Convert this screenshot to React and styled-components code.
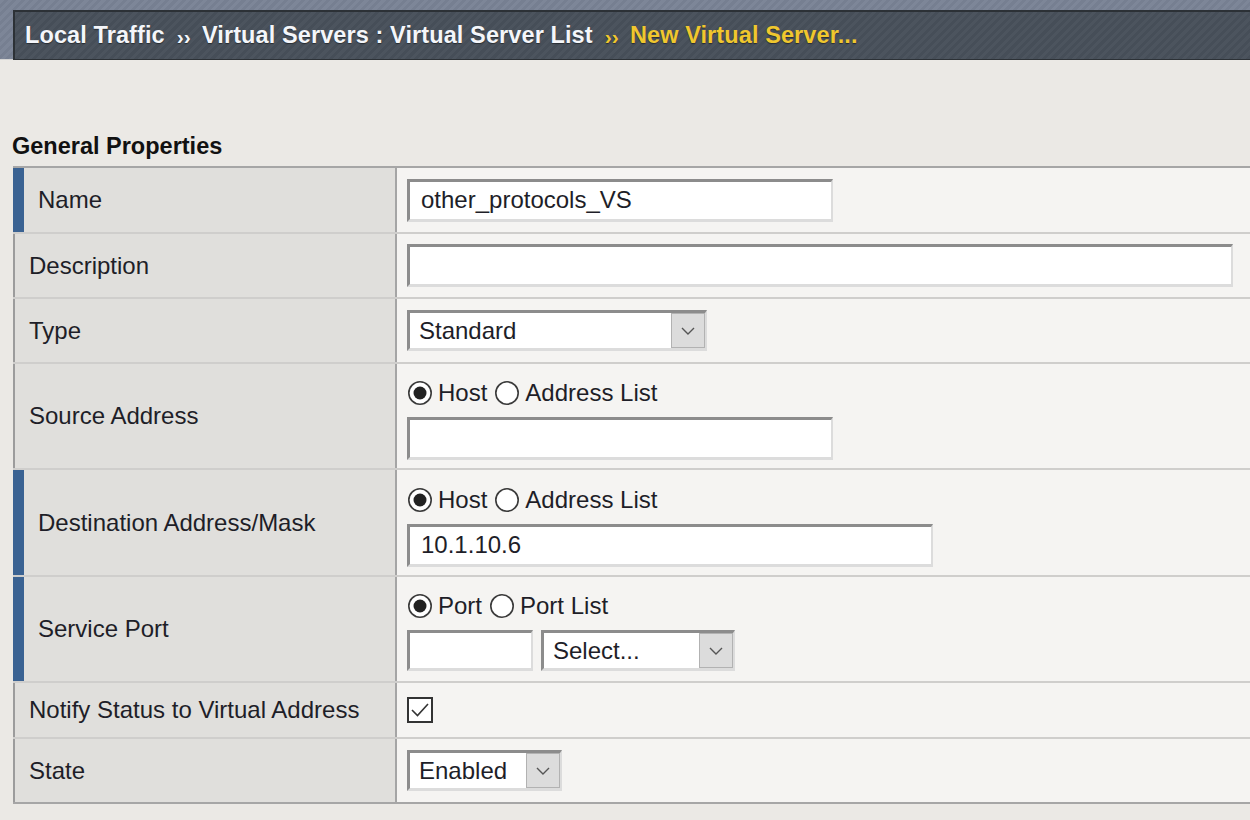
import styled, { createGlobalStyle } from "styled-components";

const GlobalStyle = createGlobalStyle`
  html, body {
    margin: 0;
    padding: 0;
    background: #ebe9e5;
  }
  body {
    font-family: "Liberation Sans", Arial, sans-serif;
    color: #1e1e28;
    overflow: hidden;
  }
`;

function Chevron() {
  return (
    <svg width="16" height="10" viewBox="0 0 16 10">
      <path d="M2 2 L8 8 L14 2" fill="none" stroke="#555" strokeWidth="1.4" />
    </svg>
  );
}

function RadioMark({ checked }) {
  return (
    <svg width="26" height="26" viewBox="0 0 26 26">
      <circle cx="13" cy="13" r="11.2" fill="#fff" stroke="#3a3a3a" strokeWidth="1.6" />
      {checked && <circle cx="13" cy="13" r="6.5" fill="#222" />}
    </svg>
  );
}

function CheckMark() {
  return (
    <svg width="26" height="26" viewBox="0 0 26 26">
      <rect x="1" y="1" width="24" height="24" fill="#fff" stroke="#333" strokeWidth="2" />
      <path d="M5 13 L10.5 18.5 L21 7" fill="none" stroke="#333" strokeWidth="1.6" />
    </svg>
  );
}

function App() {
  return (
    <Page>
      <GlobalStyle />
      <TopBand>
        <Crumbs>
          <span>Local Traffic</span>
          <Sep>››</Sep>
          <span>Virtual Servers : Virtual Server List</span>
          <Sep $current>››</Sep>
          <Current>New Virtual Server...</Current>
        </Crumbs>
      </TopBand>

      <SectionTitle>General Properties</SectionTitle>

      <Table>
        <Row $h={66}>
          <Label $req>Name</Label>
          <Value>
            <TextBox $w={426} readOnly value="other_protocols_VS" />
          </Value>
        </Row>
        <Row $h={65}>
          <Label>Description</Label>
          <Value>
            <TextBox $w={826} readOnly value="" />
          </Value>
        </Row>
        <Row $h={65}>
          <Label>Type</Label>
          <Value>
            <Select $w={300}>
              <SelectText>Standard</SelectText>
              <Arrow>
                <Chevron />
              </Arrow>
            </Select>
          </Value>
        </Row>
        <Row $h={106}>
          <Label>Source Address</Label>
          <Value $pad={7}>
            <RadioLine>
              <Radio>
                <RadioMark checked />
                <span>Host</span>
              </Radio>
              <Radio>
                <RadioMark />
                <span>Address List</span>
              </Radio>
            </RadioLine>
            <TextBox $w={426} readOnly value="" />
          </Value>
        </Row>
        <Row $h={107}>
          <Label $req>Destination Address/Mask</Label>
          <Value $pad={7}>
            <RadioLine>
              <Radio>
                <RadioMark checked />
                <span>Host</span>
              </Radio>
              <Radio>
                <RadioMark />
                <span>Address List</span>
              </Radio>
            </RadioLine>
            <TextBox $w={526} readOnly value="10.1.10.6" />
          </Value>
        </Row>
        <Row $h={106}>
          <Label $req>Service Port</Label>
          <Value $pad={5}>
            <RadioLine>
              <Radio>
                <RadioMark checked />
                <span>Port</span>
              </Radio>
              <Radio>
                <RadioMark />
                <span>Port List</span>
              </Radio>
            </RadioLine>
            <Inline>
              <TextBox $w={126} $h={41} readOnly value="" />
              <Select $w={194}>
                <SelectText>Select...</SelectText>
                <Arrow>
                  <Chevron />
                </Arrow>
              </Select>
            </Inline>
          </Value>
        </Row>
        <Row $h={56}>
          <Label>Notify Status to Virtual Address</Label>
          <Value>
            <CheckMark />
          </Value>
        </Row>
        <Row $h={63} $last>
          <Label>State</Label>
          <Value>
            <Select $w={155}>
              <SelectText>Enabled</SelectText>
              <Arrow>
                <Chevron />
              </Arrow>
            </Select>
          </Value>
        </Row>
      </Table>
    </Page>
  );
}

export default App;

const Page = styled.div`
  width: 1250px;
  min-height: 820px;
`;

const TopBand = styled.div`
  height: 60px;
  box-sizing: border-box;
  padding: 10px 0 0 13px;
  background: repeating-linear-gradient(
    135deg,
    #7d8698 0px,
    #7d8698 3px,
    #767f91 3px,
    #767f91 6px
  );
  border-bottom: 1px solid #d4d4d4;
`;

const Crumbs = styled.div`
  height: 50px;
  box-sizing: border-box;
  border: 2px solid #2c3136;
  border-right: none;
  border-bottom-width: 1px;
  background: repeating-linear-gradient(
    135deg,
    #4c545e 0px,
    #4c545e 3px,
    #464e58 3px,
    #464e58 6px
  );
  display: flex;
  align-items: center;
  padding-left: 10px;
  font-size: 23.5px;
  letter-spacing: 0.1px;
  font-weight: bold;
  color: #f4f6fa;
  text-shadow: 0 1px 1px rgba(0, 0, 0, 0.45);
  white-space: nowrap;
`;

const Sep = styled.span`
  font-size: 21px;
  margin: 3px 11px 0 12px;
  color: ${(p) => (p.$current ? "#f0c72e" : "#f4f6fa")};
`;

const Current = styled.span`
  color: #f0c72e;
`;

const SectionTitle = styled.div`
  margin: 73px 0 0 12px;
  font-size: 23.5px;
  line-height: 26px;
  font-weight: bold;
  color: #111;
`;

const Table = styled.div`
  margin: 7px 0 0 13px;
  border-top: 2px solid #a6a6a6;
  border-bottom: 2px solid #a6a6a6;
`;

const Row = styled.div`
  display: grid;
  grid-template-columns: 384px 1fr;
  height: ${(p) => p.$h - (p.$last ? 0 : 2)}px;
  border-bottom: ${(p) => (p.$last ? "none" : "2px solid #cfcecc")};
`;

const Label = styled.div`
  box-sizing: border-box;
  background: #e0dfdc;
  border-left: ${(p) => (p.$req ? "11px solid #3a6292" : "2px solid #9c9c9c")};
  border-right: 2px solid #a5a5a5;
  padding-left: 14px;
  display: flex;
  align-items: center;
  font-size: 24px;
  white-space: nowrap;
`;

const Value = styled.div`
  box-sizing: border-box;
  background: #f5f4f2;
  padding: ${(p) => p.$pad || 0}px 0 0 10px;
  display: flex;
  flex-direction: column;
  justify-content: center;
  align-items: flex-start;
  gap: 10px;
`;

const TextBox = styled.input`
  width: ${(p) => p.$w}px;
  height: ${(p) => p.$h || 43}px;
  box-sizing: border-box;
  margin: 0;
  background: #fff;
  border-style: solid;
  border-width: 3px 2px 3px 3px;
  border-color: #8c8c8c #dcdcdc #dcdcdc #8c8c8c;
  padding: 0 0 0 11px;
  font-family: "Liberation Sans", Arial, sans-serif;
  font-size: 24px;
  color: #1e1e28;
  outline: none;
`;

const Select = styled.div`
  width: ${(p) => p.$w}px;
  height: 41px;
  box-sizing: border-box;
  display: flex;
  background: #fff;
  border-style: solid;
  border-width: 3px 2px 3px 3px;
  border-color: #8c8c8c #dcdcdc #dcdcdc #8c8c8c;
`;

const SelectText = styled.span`
  flex: 1;
  display: flex;
  align-items: center;
  padding-left: 9px;
  font-size: 24px;
`;

const Arrow = styled.span`
  width: 34px;
  box-sizing: border-box;
  background: #dcdcdc;
  border: 1px solid #b2b2b2;
  display: flex;
  align-items: center;
  justify-content: center;
`;

const RadioLine = styled.div`
  display: flex;
  align-items: center;
  height: 28px;
  font-size: 24px;
`;

const Radio = styled.label`
  display: flex;
  align-items: center;
  gap: 5px;
  margin-right: 7px;
  svg {
    flex: none;
  }
`;

const Inline = styled.div`
  display: flex;
  gap: 8px;
`;
